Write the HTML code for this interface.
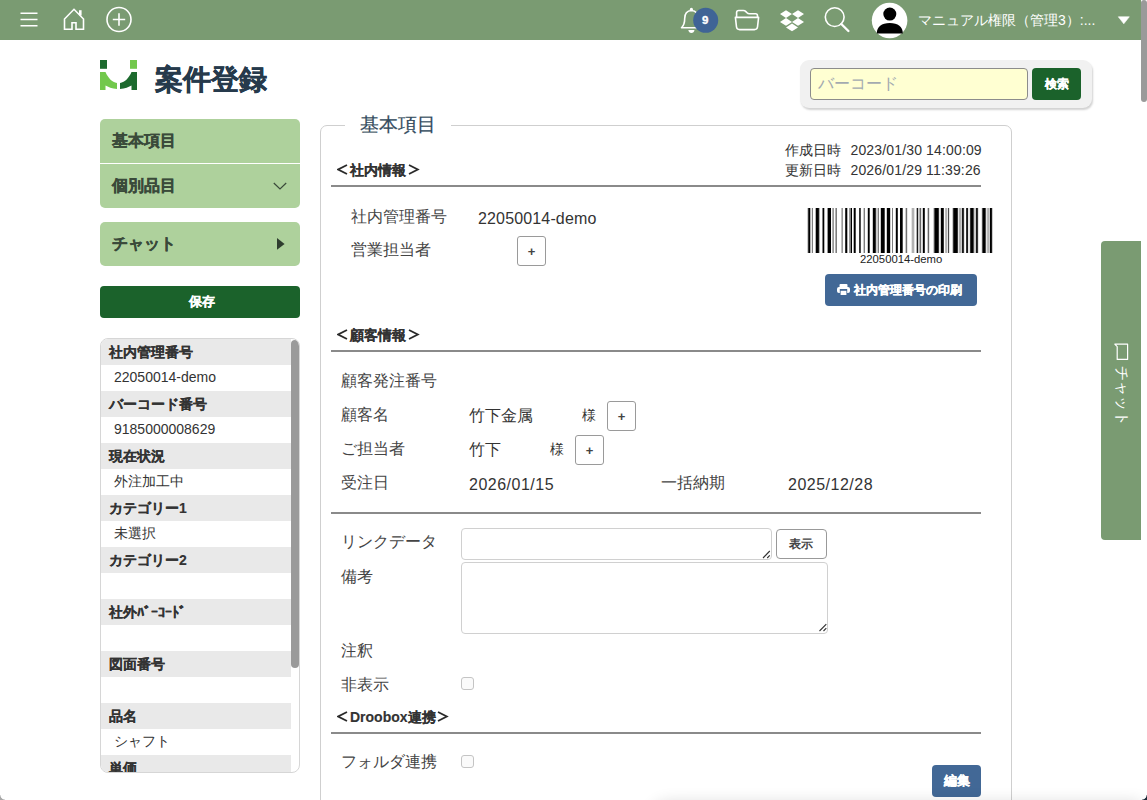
<!DOCTYPE html>
<html lang="ja"><head><meta charset="utf-8">
<style>
*{box-sizing:border-box;margin:0;padding:0}
html,body{width:1147px;height:800px;overflow:hidden;background:#fff;font-family:"Liberation Sans",sans-serif;color:#333}
.a{position:absolute}
#hdr{left:0;top:0;width:1141px;height:40px;background:#7a9b72}
#sb{left:1141px;top:0;width:6px;height:102px;background:#9a9a9a;border-radius:3px}
.t{position:absolute;white-space:nowrap;line-height:1}
.nav{left:100px;width:200px;background:#aed19c;border-radius:5px}
.navt{font-size:16px;font-weight:bold;color:#3a4a3a;-webkit-text-stroke:0.3px #3a4a3a}
.lst{left:100px;top:338px;width:200px;height:435px;border:1px solid #d6d6d6;border-radius:8px;overflow:hidden}
.rh{position:absolute;left:0;width:190px;height:26px;background:#e9e9e9}
.rk{position:absolute;left:8px;font-size:14px;font-weight:bold;color:#333;line-height:1;-webkit-text-stroke:0.15px #333}
.rv{position:absolute;left:13px;font-size:14px;color:#333;line-height:1}
.lbl{font-size:16px;color:#444}
.val{font-size:16px;color:#333}
.hr{position:absolute;left:331px;width:650px;height:2px;background:#8a8a8a}
.sec{font-size:14px;font-weight:bold;color:#333;-webkit-text-stroke:0.15px #333}
.pb{position:absolute;width:29px;height:30px;border:1px solid #9a9a9a;border-radius:3px;background:#fff;font-size:13px;font-weight:bold;text-align:center;line-height:29px;color:#444}
.ta{position:absolute;border:1px solid #d0d0d0;border-radius:4px;background:#fff}
.cb{position:absolute;width:13px;height:13px;border:1px solid #c4c4c4;border-radius:3px;background:#fafafa}
.btnb{position:absolute;background:#426896;border-radius:4px;color:#fff;font-weight:bold;text-align:center;-webkit-text-stroke:0.3px #fff}
</style></head><body>
<div id="hdr" class="a">
 <svg class="a" style="left:0;top:0" width="1141" height="40">
  <g stroke="#fff" stroke-width="1.6" fill="none">
   <path d="M20.5 13.2H37.5M20.5 19.5H37.5M20.5 25.8H37.5"/>
   <path d="M64.5 29.3V19L74 9.3L83.5 19V29.3H76V22.8H72V29.3Z" stroke-linejoin="miter"/>
   <path d="M80.3 15.5V10.2" stroke-width="2.6"/>
   <circle cx="119" cy="19.5" r="12"/>
   <path d="M112.8 19.5H125.2M119 13.3V25.7"/>
   <path d="M681.5 27.8C684 25.3 684.7 22.5 684.7 18.5C684.7 13.5 687.2 10.8 691.4 10.5C695.6 10.8 698.1 13.5 698.1 18.5C698.1 22.5 698.8 25.3 701.3 27.8Z" stroke-linejoin="round"/>
   
   <path d="M736.6 17V12.6Q736.6 10.5 738.7 10.5H743.3Q744.9 10.5 745.9 11.6L747 12.8Q747.9 13.8 749.4 13.8H755.6Q757.5 13.8 757.5 15.7V17" stroke-linejoin="round"/>
   <path d="M735.4 17.4H758.6L757.5 27Q757.1 29.6 754.4 29.6H739.6Q736.9 29.6 736.5 27Z" stroke-linejoin="round"/>
   <circle cx="834.7" cy="17.1" r="9.4"/>
   <path d="M841.3 24L848.4 31" stroke-width="2.4" stroke-linecap="round"/>
   <path d="M665 0" />
  </g>
  <circle cx="705.7" cy="20.3" r="12.5" fill="#3f6496"/>
  <g fill="#fff">
   <path d="M688.3 29.9H694.5C694.2 31.8 693 32.9 691.4 32.9C689.8 32.9 688.6 31.8 688.3 29.9Z"/><circle cx="691.4" cy="9.4" r="1.6"/>
   <path d="M786 10.3L780 14.1L786 17.9L792 14.1Z M798 10.3L792 14.1L798 17.9L804 14.1Z M786 18.1L780 21.9L786 25.7L792 21.9Z M798 18.1L792 21.9L798 25.7L804 21.9Z M786 27.4L792 31.2L798 27.4L792 23.6Z"/>
   <circle cx="889.6" cy="20.5" r="17.8"/>
   <path d="M1118.3 16.8H1129.3L1123.8 23.8Z" stroke="#fff" stroke-width="0.6" stroke-linejoin="round"/>
  </g>
  <g fill="#000">
   <circle cx="889.8" cy="14.1" r="6.5"/>
   <path d="M876.8 33.4C876.8 26.6 881.5 22.9 889.8 22.9C898 22.9 902.8 26.6 902.8 33.4Z"/>
  </g>
 </svg>
 <div class="t" style="left:702px;top:15px;font-size:11.5px;font-weight:bold;color:#fff;-webkit-text-stroke:0.4px #fff">9</div>
 <div class="t" style="left:918px;top:12.5px;font-size:14px;color:#fff">マニュアル権限（管理3）:...</div>
 <svg class="a" style="display:none" width="1" height="1"><g>
 </svg>
</div>
<div id="sb" class="a"></div>
<!-- logo -->
<svg class="a" style="left:0;top:0" width="300" height="100">
 <rect x="100" y="60" width="7" height="8.8" fill="#1d6a2e"/>
 <rect x="130" y="60" width="7" height="8.8" fill="#72c84c"/>
 <path d="M100,72 H105.5 C108,78 112,82 117,83 V89 C112,88.5 108,87 105.5,85.5 V90 H100 Z" fill="#72c84c"/>
 <path d="M137,72 H131.5 C129,78 125,82 120,83 V89 C125,88.5 129,87 131.5,85.5 V90 H137 Z" fill="#1d6a2e"/>
</svg>
<div class="t" style="left:155px;top:66px;font-size:28px;font-weight:bold;color:#263a4c;-webkit-text-stroke:0.45px #263a4c">案件登録</div>
<!-- search box -->
<div class="a" style="left:800px;top:60px;width:292px;height:48px;background:#f1f1f1;border-radius:9px;box-shadow:1px 2px 2px rgba(0,0,0,.18)"></div>
<div class="a" style="left:810px;top:68px;width:218px;height:32px;background:#ffffd2;border:1px solid #8c8c8c;border-radius:4px"></div>
<div class="t" style="left:818px;top:76px;font-size:15.5px;color:#a3aab0">バーコード</div>
<div class="a" style="left:1032px;top:68px;width:49px;height:32px;background:#1b622b;border-radius:4px"></div>
<div class="t" style="left:1044.5px;top:78px;font-size:12px;font-weight:bold;color:#fff;-webkit-text-stroke:0.3px #fff">検索</div>
<!-- sidebar nav -->
<div class="a nav" style="top:119px;height:89px"></div>
<div class="a" style="left:100px;top:163px;width:200px;height:1px;background:#fff"></div>
<div class="t navt" style="left:112px;top:133px">基本項目</div>
<div class="t navt" style="left:112px;top:178px">個別品目</div>
<svg class="a" style="left:270px;top:178px" width="20" height="14"><path d="M3.8 5L10 11L16.2 5" stroke="#3a4a3a" stroke-width="1.2" fill="none"/></svg>
<div class="a nav" style="top:222px;height:44px"></div>
<div class="t navt" style="left:112px;top:236px">チャット</div>
<svg class="a" style="left:270px;top:232px" width="20" height="24"><path d="M7 6L14.6 12L7 17.8Z" fill="#2f3d2f"/></svg>
<div class="a" style="left:100px;top:286px;width:200px;height:32px;background:#1b622b;border-radius:4px"></div>
<div class="t" style="left:188.5px;top:295.5px;font-size:12.5px;font-weight:bold;color:#fff;-webkit-text-stroke:0.3px #fff">保存</div>
<!-- list -->
<div class="a lst">
 <div class="rh" style="top:0px"></div><div class="rk" style="top:5.5px">社内管理番号</div><div class="rv" style="top:31px">22050014-demo</div><div class="rh" style="top:52px"></div><div class="rk" style="top:57.5px">バーコード番号</div><div class="rv" style="top:83px">9185000008629</div><div class="rh" style="top:104px"></div><div class="rk" style="top:109.5px">現在状況</div><div class="rv" style="top:135px">外注加工中</div><div class="rh" style="top:156px"></div><div class="rk" style="top:161.5px">カテゴリー1</div><div class="rv" style="top:187px">未選択</div><div class="rh" style="top:208px"></div><div class="rk" style="top:213.5px">カテゴリー2</div><div class="rh" style="top:260px"></div><div class="rk" style="top:265.5px">社外ﾊﾞｰｺｰﾄﾞ</div><div class="rh" style="top:312px"></div><div class="rk" style="top:317.5px">図面番号</div><div class="rh" style="top:364px"></div><div class="rk" style="top:369.5px">品名</div><div class="rv" style="top:395px">シャフト</div><div class="rh" style="top:416px"></div><div class="rk" style="top:421.5px">単価</div>
 <div class="a" style="left:190px;top:1px;width:8px;height:328px;background:#9a9a9a;border-radius:4px"></div>
</div>
<!-- card -->
<div class="a" style="left:320px;top:125px;width:692px;height:700px;border:1px solid #cfcfcf;border-radius:7px"></div>
<div class="a" style="left:345px;top:118px;width:106px;height:14px;background:#fff"></div>
<div class="t" style="left:360px;top:115px;font-size:19px;color:#344c60;-webkit-text-stroke:0.2px #344c60">基本項目</div>
<div class="t" style="left:785px;top:143px;font-size:14px;color:#333">作成日時</div><div class="t" style="left:850.5px;top:143px;font-size:14px;color:#333;letter-spacing:0.15px">2023/01/30 14:00:09</div>
<div class="t" style="left:785px;top:163px;font-size:14px;color:#333">更新日時</div><div class="t" style="left:850.5px;top:163px;font-size:14px;color:#333;letter-spacing:0.15px">2026/01/29 11:39:26</div>
<svg class="a" style="left:337px;top:164px" width="12" height="12"><path d="M10 1L1.2 5.5L10 10" stroke="#2a2a2a" stroke-width="1.8" fill="none"/></svg><div class="t sec" style="left:350px;top:163px">社内情報</div><svg class="a" style="left:408px;top:164px" width="12" height="12"><path d="M1 1L9.8 5.5L1 10" stroke="#2a2a2a" stroke-width="1.8" fill="none"/></svg>
<div class="hr" style="top:185px"></div>
<div class="t lbl" style="left:351px;top:209px">社内管理番号</div>
<div class="t val" style="left:478px;top:211px;letter-spacing:0.15px">22050014-demo</div>
<div class="t lbl" style="left:351px;top:242px">営業担当者</div>
<div class="pb" style="left:517px;top:236px">+</div>
<svg width="189" height="45" style="position:absolute;left:805px;top:208px" shape-rendering="crispEdges"><rect x="2" width="1" height="45" fill="#cccccc"/><rect x="3" width="1" height="45" fill="#333333"/><rect x="4" width="1" height="45" fill="#000000"/><rect x="5" width="1" height="45" fill="#b2b2b2"/><rect x="6" width="1" height="45" fill="#e5e5e5"/><rect x="7" width="1" height="45" fill="#7f7f7f"/><rect x="10" width="1" height="45" fill="#b2b2b2"/><rect x="11" width="1" height="45" fill="#000000"/><rect x="12" width="1" height="45" fill="#000000"/><rect x="13" width="1" height="45" fill="#191919"/><rect x="14" width="1" height="45" fill="#b2b2b2"/><rect x="17" width="1" height="45" fill="#7f7f7f"/><rect x="18" width="1" height="45" fill="#000000"/><rect x="19" width="1" height="45" fill="#b2b2b2"/><rect x="22" width="1" height="45" fill="#999999"/><rect x="23" width="1" height="45" fill="#000000"/><rect x="24" width="1" height="45" fill="#000000"/><rect x="25" width="1" height="45" fill="#000000"/><rect x="27" width="1" height="45" fill="#b2b2b2"/><rect x="28" width="1" height="45" fill="#999999"/><rect x="30" width="1" height="45" fill="#b2b2b2"/><rect x="31" width="1" height="45" fill="#7f7f7f"/><rect x="36" width="1" height="45" fill="#bfbfbf"/><rect x="37" width="1" height="45" fill="#999999"/><rect x="40" width="1" height="45" fill="#333333"/><rect x="41" width="1" height="45" fill="#000000"/><rect x="42" width="1" height="45" fill="#b2b2b2"/><rect x="44" width="1" height="45" fill="#999999"/><rect x="45" width="1" height="45" fill="#7f7f7f"/><rect x="46" width="1" height="45" fill="#000000"/><rect x="48" width="1" height="45" fill="#b2b2b2"/><rect x="49" width="1" height="45" fill="#000000"/><rect x="50" width="1" height="45" fill="#4c4c4c"/><rect x="54" width="1" height="45" fill="#333333"/><rect x="55" width="1" height="45" fill="#4c4c4c"/><rect x="58" width="1" height="45" fill="#cccccc"/><rect x="59" width="1" height="45" fill="#7f7f7f"/><rect x="62" width="1" height="45" fill="#cccccc"/><rect x="63" width="1" height="45" fill="#000000"/><rect x="64" width="1" height="45" fill="#4c4c4c"/><rect x="67" width="1" height="45" fill="#cccccc"/><rect x="68" width="1" height="45" fill="#000000"/><rect x="69" width="1" height="45" fill="#000000"/><rect x="70" width="1" height="45" fill="#333333"/><rect x="71" width="1" height="45" fill="#cccccc"/><rect x="72" width="1" height="45" fill="#cccccc"/><rect x="73" width="1" height="45" fill="#7f7f7f"/><rect x="75" width="1" height="45" fill="#cccccc"/><rect x="76" width="1" height="45" fill="#000000"/><rect x="77" width="1" height="45" fill="#000000"/><rect x="78" width="1" height="45" fill="#000000"/><rect x="79" width="1" height="45" fill="#4c4c4c"/><rect x="81" width="1" height="45" fill="#cccccc"/><rect x="82" width="1" height="45" fill="#000000"/><rect x="83" width="1" height="45" fill="#000000"/><rect x="84" width="1" height="45" fill="#000000"/><rect x="85" width="1" height="45" fill="#cccccc"/><rect x="87" width="1" height="45" fill="#7f7f7f"/><rect x="90" width="1" height="45" fill="#cccccc"/><rect x="91" width="1" height="45" fill="#000000"/><rect x="92" width="1" height="45" fill="#333333"/><rect x="95" width="1" height="45" fill="#000000"/><rect x="96" width="1" height="45" fill="#000000"/><rect x="97" width="1" height="45" fill="#4c4c4c"/><rect x="100" width="1" height="45" fill="#cccccc"/><rect x="101" width="1" height="45" fill="#727272"/><rect x="102" width="1" height="45" fill="#e5e5e5"/><rect x="106" width="1" height="45" fill="#e5e5e5"/><rect x="107" width="1" height="45" fill="#b2b2b2"/><rect x="108" width="1" height="45" fill="#b2b2b2"/><rect x="109" width="1" height="45" fill="#e5e5e5"/><rect x="111" width="1" height="45" fill="#b2b2b2"/><rect x="112" width="1" height="45" fill="#191919"/><rect x="113" width="1" height="45" fill="#cccccc"/><rect x="114" width="1" height="45" fill="#b2b2b2"/><rect x="115" width="1" height="45" fill="#666666"/><rect x="116" width="1" height="45" fill="#e5e5e5"/><rect x="117" width="1" height="45" fill="#cccccc"/><rect x="118" width="1" height="45" fill="#000000"/><rect x="119" width="1" height="45" fill="#333333"/><rect x="122" width="1" height="45" fill="#cccccc"/><rect x="123" width="1" height="45" fill="#666666"/><rect x="124" width="1" height="45" fill="#e5e5e5"/><rect x="128" width="1" height="45" fill="#cccccc"/><rect x="129" width="1" height="45" fill="#4c4c4c"/><rect x="130" width="1" height="45" fill="#000000"/><rect x="131" width="1" height="45" fill="#000000"/><rect x="132" width="1" height="45" fill="#000000"/><rect x="133" width="1" height="45" fill="#333333"/><rect x="134" width="1" height="45" fill="#e5e5e5"/><rect x="135" width="1" height="45" fill="#cccccc"/><rect x="136" width="1" height="45" fill="#000000"/><rect x="137" width="1" height="45" fill="#000000"/><rect x="138" width="1" height="45" fill="#333333"/><rect x="140" width="1" height="45" fill="#bfbfbf"/><rect x="141" width="1" height="45" fill="#b2b2b2"/><rect x="142" width="1" height="45" fill="#e5e5e5"/><rect x="143" width="1" height="45" fill="#4c4c4c"/><rect x="144" width="1" height="45" fill="#e5e5e5"/><rect x="147" width="1" height="45" fill="#cccccc"/><rect x="148" width="1" height="45" fill="#333333"/><rect x="149" width="1" height="45" fill="#000000"/><rect x="150" width="1" height="45" fill="#000000"/><rect x="151" width="1" height="45" fill="#000000"/><rect x="152" width="1" height="45" fill="#333333"/><rect x="153" width="1" height="45" fill="#e5e5e5"/><rect x="154" width="1" height="45" fill="#b2b2b2"/><rect x="155" width="1" height="45" fill="#b2b2b2"/><rect x="156" width="1" height="45" fill="#cccccc"/><rect x="157" width="1" height="45" fill="#191919"/><rect x="158" width="1" height="45" fill="#333333"/><rect x="159" width="1" height="45" fill="#e5e5e5"/><rect x="161" width="1" height="45" fill="#333333"/><rect x="162" width="1" height="45" fill="#191919"/><rect x="163" width="1" height="45" fill="#e5e5e5"/><rect x="164" width="1" height="45" fill="#e5e5e5"/><rect x="165" width="1" height="45" fill="#333333"/><rect x="166" width="1" height="45" fill="#000000"/><rect x="167" width="1" height="45" fill="#000000"/><rect x="168" width="1" height="45" fill="#4c4c4c"/><rect x="169" width="1" height="45" fill="#cccccc"/><rect x="170" width="1" height="45" fill="#cccccc"/><rect x="171" width="1" height="45" fill="#191919"/><rect x="172" width="1" height="45" fill="#333333"/><rect x="173" width="1" height="45" fill="#e5e5e5"/><rect x="176" width="1" height="45" fill="#e5e5e5"/><rect x="177" width="1" height="45" fill="#4c4c4c"/><rect x="178" width="1" height="45" fill="#000000"/><rect x="179" width="1" height="45" fill="#000000"/><rect x="180" width="1" height="45" fill="#4c4c4c"/><rect x="181" width="1" height="45" fill="#e5e5e5"/><rect x="182" width="1" height="45" fill="#bfbfbf"/><rect x="183" width="1" height="45" fill="#b2b2b2"/><rect x="184" width="1" height="45" fill="#cccccc"/><rect x="185" width="1" height="45" fill="#000000"/><rect x="186" width="1" height="45" fill="#191919"/><rect x="187" width="1" height="45" fill="#cccccc"/></svg>
<div class="t" style="left:860px;top:254px;font-size:11.3px;color:#222;letter-spacing:0px">22050014-demo</div>
<div class="btnb" style="left:825px;top:274px;width:152px;height:32px"></div><svg class="a" style="left:825px;top:274px" width="152" height="32"><g fill="#fff"><rect x="14.5" y="10" width="8" height="3.5" rx="1"/><rect x="12" y="13" width="13" height="6" rx="2"/><rect x="14.8" y="15" width="7.4" height="6.2" fill="#426896"/><rect x="15.6" y="16.8" width="5.8" height="4.2"/></g></svg><div class="t" style="left:853.5px;top:283.5px;font-size:12.2px;font-weight:bold;color:#fff;-webkit-text-stroke:0.3px #fff">社内管理番号の印刷</div>
<svg class="a" style="left:337px;top:329px" width="12" height="12"><path d="M10 1L1.2 5.5L10 10" stroke="#2a2a2a" stroke-width="1.8" fill="none"/></svg><div class="t sec" style="left:350px;top:328px">顧客情報</div><svg class="a" style="left:408px;top:329px" width="12" height="12"><path d="M1 1L9.8 5.5L1 10" stroke="#2a2a2a" stroke-width="1.8" fill="none"/></svg>
<div class="hr" style="top:350px"></div>
<div class="t lbl" style="left:341px;top:373px">顧客発注番号</div>
<div class="t lbl" style="left:341px;top:407px">顧客名</div>
<div class="t val" style="left:469px;top:408px">竹下金属</div>
<div class="t" style="left:582px;top:408px;font-size:14px">様</div>
<div class="pb" style="left:607px;top:401px">+</div>
<div class="t lbl" style="left:341px;top:441px">ご担当者</div>
<div class="t val" style="left:469px;top:442px">竹下</div>
<div class="t" style="left:550px;top:442px;font-size:14px">様</div>
<div class="pb" style="left:575px;top:435px">+</div>
<div class="t lbl" style="left:341px;top:475px">受注日</div>
<div class="t val" style="left:469px;top:477px;letter-spacing:0.5px">2026/01/15</div>
<div class="t lbl" style="left:661px;top:475px">一括納期</div>
<div class="t val" style="left:788px;top:477px;letter-spacing:0.5px">2025/12/28</div>
<div class="hr" style="top:512px"></div>
<div class="t lbl" style="left:341px;top:534px">リンクデータ</div>
<div class="ta" style="left:461px;top:528px;width:311px;height:32px"></div>
<div class="a" style="left:776px;top:529px;width:51px;height:30px;border:1px solid #999;border-radius:4px;background:#fff"></div>
<div class="t" style="left:789px;top:537.5px;font-size:12px;font-weight:bold;color:#444">表示</div>
<div class="t lbl" style="left:341px;top:569px">備考</div>
<div class="ta" style="left:461px;top:562px;width:367px;height:72px"></div>
<svg class="a" style="left:0;top:0;pointer-events:none" width="1147" height="800"><g stroke="#333" stroke-width="1.1" fill="none"><path d="M763 558L769.8 551M767.2 558L769.8 555.3"/><path d="M819.5 631L826.3 624.2M823.5 631L826.3 628.2"/></g></svg>
<div class="t lbl" style="left:341px;top:643px">注釈</div>
<div class="t lbl" style="left:341px;top:677px">非表示</div>
<div class="cb" style="left:461px;top:677px"></div>
<svg class="a" style="left:337px;top:711px" width="12" height="12"><path d="M10 1L1.2 5.5L10 10" stroke="#2a2a2a" stroke-width="1.8" fill="none"/></svg><div class="t sec" style="left:350px;top:710px">Droobox連携</div><svg class="a" style="left:437px;top:711px" width="12" height="12"><path d="M1 1L9.8 5.5L1 10" stroke="#2a2a2a" stroke-width="1.8" fill="none"/></svg>
<div class="hr" style="top:732px"></div>
<div class="t lbl" style="left:341px;top:754px">フォルダ連携</div>
<div class="cb" style="left:461px;top:755px"></div>
<div class="btnb" style="left:932px;top:765px;width:49px;height:31.5px;font-size:13px;line-height:31px">編集</div>
<div class="a" style="left:650px;top:802px;width:491px;height:40px;box-shadow:0 0 16px rgba(0,0,0,.14);background:#fff;border-radius:20px 0 0 0"></div>
<!-- chat tab -->
<div class="a" style="left:1101px;top:241px;width:40px;height:299px;background:#7a9b72;border-radius:4px 0 0 4px"></div>
<div class="t" style="left:1128.5px;top:366px;font-size:14.5px;color:#fff;transform:rotate(90deg);transform-origin:0 0">チャット</div><svg class="a" style="left:1100px;top:330px" width="47" height="40"><path d="M14.8 14.2H27.6V29.4H17.2V16.6Z" stroke="#fff" stroke-width="1.2" fill="none" stroke-linejoin="round"/></svg>
<div class="a" style="left:1142px;top:795px;width:5px;height:5px;background:radial-gradient(circle at 0 0,transparent 4.2px,#1d2a38 5px)"></div>
<div class="a" style="left:0;top:795px;width:5px;height:5px;background:radial-gradient(circle at 5px 0,transparent 4.2px,#a8a8a8 5px)"></div>
</body></html>
